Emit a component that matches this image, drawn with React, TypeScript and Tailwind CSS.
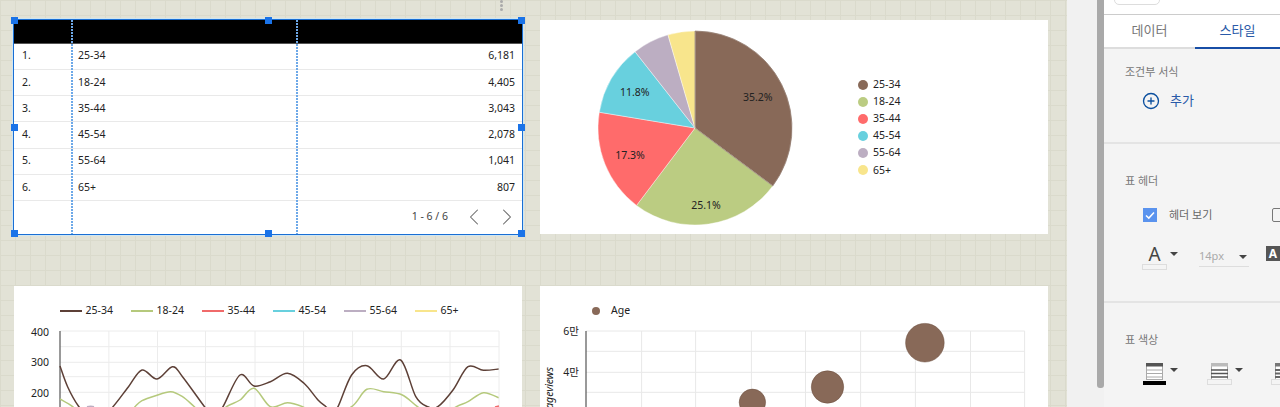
import { ChevronLeft, ChevronRight, CirclePlus } from 'lucide-react'

const ages = [
  { label: '25-34', color: '#886958', line: '#5d4037', pct: 35.2, value: '6,181' },
  { label: '18-24', color: '#bbcc82', line: '#b5c97c', pct: 25.1, value: '4,405' },
  { label: '35-44', color: '#ff6b6b', line: '#f06a6a', pct: 17.3, value: '3,043' },
  { label: '45-54', color: '#68d0de', line: '#68d0de', pct: 11.8, value: '2,078' },
  { label: '55-64', color: '#bcaec2', line: '#bcaec2', pct: 6.1, value: '1,041' },
  { label: '65+', color: '#f8e58c', line: '#f8e58c', pct: 4.5, value: '807' },
]

const brownLine: [number, number][] = [
  [60, 366], [67.6, 386.7], [78.4, 406], [90, 418], [100, 418], [113, 406.7], [128.5, 386.7], [142, 370], [157, 379],
  [172.4, 366.7], [182.5, 376.7], [204.5, 406.7], [214, 418], [223, 406.7], [240, 375], [254, 386], [270.4, 381.7],
  [287.4, 373.3], [304, 383.3], [318, 400], [326, 406.7], [332, 412], [338, 406.7], [351.6, 375], [366.8, 365.7],
  [383.7, 379], [400.6, 360], [415.8, 396.7], [427.6, 406.7], [437.8, 406.7], [453, 390], [468, 366.7], [483.4, 370.3],
  [498.6, 369],
]

const greenLine: [number, number][] = [
  [60, 399], [72.7, 406.7], [85, 418], [125, 418], [135, 406.7], [142, 400.7], [155.5, 395.7], [170.7, 391.7],
  [182.5, 396.7], [194.4, 406.7], [210, 420], [226.5, 406.7], [240, 400], [254, 388.3], [270.4, 406.7], [287.4, 402.7],
  [302.6, 406.7], [325, 418], [351.6, 406.7], [366.8, 389.3], [383.7, 391.7], [402.3, 395], [417.5, 406.7], [435, 418],
  [456.4, 406.7], [468, 401.7], [483.4, 392.7], [498.6, 397.7],
]

// catmull-rom through the points, good enough for the chart's soft curves
function smooth(points: [number, number][]) {
  let d = `M${points[0][0]} ${points[0][1]}`
  for (let i = 0; i < points.length - 1; i++) {
    const p0 = points[Math.max(i - 1, 0)]
    const p1 = points[i]
    const p2 = points[i + 1]
    const p3 = points[Math.min(i + 2, points.length - 1)]
    const c1x = p1[0] + (p2[0] - p0[0]) / 6
    const c1y = p1[1] + (p2[1] - p0[1]) / 6
    const c2x = p2[0] - (p3[0] - p1[0]) / 6
    const c2y = p2[1] - (p3[1] - p1[1]) / 6
    d += ` C${c1x} ${c1y} ${c2x} ${c2y} ${p2[0]} ${p2[1]}`
  }
  return d
}

function pieSlices(cx: number, cy: number, r: number) {
  let start = 0
  return ages.map((a) => {
    const end = start + (a.pct / 100) * Math.PI * 2
    const x1 = cx + r * Math.sin(start)
    const y1 = cy - r * Math.cos(start)
    const x2 = cx + r * Math.sin(end)
    const y2 = cy - r * Math.cos(end)
    const large = end - start > Math.PI ? 1 : 0
    start = end
    return { ...a, d: `M${cx} ${cy} L${x1} ${y1} A${r} ${r} 0 ${large} 1 ${x2} ${y2} Z` }
  })
}

function Handle({ className }: { className: string }) {
  return <span className={`absolute size-[7px] bg-[#1a73e8] ${className}`} />
}

function DataTable() {
  return (
    <div className="relative h-[214px] bg-white text-[10.5px] text-[#222] shadow-[0_0_0_1px_#1a6fd4,0_0_0_2px_#cfe6f2]">
      <div className="h-[23.5px] border-b border-[#555] bg-black" />
      {ages.map((a, i) => (
        <div key={a.label} className="flex h-[26.3px] items-center border-b border-[#e9e9e9]">
          <span className="w-[64px] pl-2">{i + 1}.</span>
          <span className="flex-1">{a.label}</span>
          <span className="pr-[7px]">{a.value}</span>
        </div>
      ))}
      <div className="flex h-[32px] items-center justify-end pr-px text-[#444]">
        <span className="mr-[12px]">1 - 6 / 6</span>
        <ChevronLeft className="size-7 text-[#666]" strokeWidth={0.9} />
        <ChevronRight className="ml-[5px] size-7 text-[#666]" strokeWidth={0.9} />
      </div>
      <span className="absolute inset-y-0 left-[56.5px] w-[2px] bg-[repeating-linear-gradient(#6ea9e8_0_2px,transparent_2px_3px)]" />
      <span className="absolute inset-y-0 left-[282px] w-[2px] bg-[repeating-linear-gradient(#6ea9e8_0_2px,transparent_2px_3px)]" />
      <Handle className="-left-[3px] -top-[3px]" />
      <Handle className="left-[251px] -top-[3px]" />
      <Handle className="-right-[3px] -top-[3px]" />
      <Handle className="-left-[3px] top-[104px]" />
      <Handle className="-right-[3px] top-[104px]" />
      <Handle className="-bottom-[3px] -left-[3px]" />
      <Handle className="-bottom-[3px] left-[251px]" />
      <Handle className="-bottom-[3px] -right-[3px]" />
    </div>
  )
}

function PieCard() {
  return (
    <div className="flex h-[214px] items-center bg-white pl-[55px] pt-[1px] text-[10.5px] text-[#222]">
      <svg viewBox="595 27.5 200 200" className="size-[200px] shrink-0">
        {pieSlices(695, 127.5, 97).map((s) => (
          <path key={s.label} d={s.d} fill={s.color} stroke="#fff" strokeWidth="0.4" />
        ))}
        <path d={pieSlices(695, 127.5, 97)[0].d} fill="none" stroke="#6b4c3d" strokeWidth="0.5" />
        <g fontSize="10.5" fill="#222" textAnchor="middle">
          <text x="757.8" y="100">35.2%</text>
          <text x="706" y="208">25.1%</text>
          <text x="630" y="158">17.3%</text>
          <text x="634.8" y="95">11.8%</text>
        </g>
      </svg>
      <div className="ml-[63px] flex flex-col">
        {ages.map((a) => (
          <div key={a.label} className="flex h-[17.2px] items-center gap-[5px]">
            <span className="size-[10px] rounded-full" style={{ backgroundColor: a.color }} />
            <span>{a.label}</span>
          </div>
        ))}
      </div>
    </div>
  )
}

function LineCard() {
  const hLines = [331, 346.7, 362.3, 376.7, 392.3]
  const vLines = [108.9, 157.5, 205.5, 255, 303.6, 352.6, 401.3, 450, 499]
  return (
    <div className="h-[214px] overflow-hidden bg-white text-[10.5px] text-[#222]">
      <div className="flex h-[32px] items-end pl-[46px]">
        {ages.map((a) => (
          <div key={a.label} className="flex h-[14px] w-[71px] items-center gap-[4px]">
            <span className="h-[2px] w-[21.5px]" style={{ backgroundColor: a.line }} />
            <span>{a.label}</span>
          </div>
        ))}
      </div>
      <svg viewBox="14 318 508 120" className="block h-[120px] w-[508px]">
        {hLines.map((y) => (
          <line key={y} x1="60" x2="499" y1={y} y2={y} stroke="#ececec" />
        ))}
        {vLines.map((x) => (
          <line key={x} x1={x} x2={x} y1="331" y2="438" stroke="#ececec" />
        ))}
        <line x1="60" x2="60" y1="331" y2="438" stroke="#555" strokeWidth="1.2" />
        <path d={smooth(greenLine)} fill="none" stroke="#b5c97c" strokeWidth="1.5" />
        <path d={smooth(brownLine)} fill="none" stroke="#5d4037" strokeWidth="1.5" />
        <path d="M87 406.8 Q91 405.6 94 406.8" fill="none" stroke="#bcaec2" strokeWidth="1.5" />
        <path d="M495 407 L499 406" fill="none" stroke="#f06a6a" strokeWidth="1.5" />
        <g fontSize="10.5" fill="#222" textAnchor="end">
          <text x="49" y="336">400</text>
          <text x="49" y="366">300</text>
          <text x="49" y="397">200</text>
        </g>
      </svg>
    </div>
  )
}

function BubbleCard() {
  const hLines = [331, 351.3, 372.3, 392.3]
  const vLines = [641.6, 695.6, 751.4, 805.5, 860.6, 915.4, 970.5, 1024.6]
  return (
    <div className="h-[214px] overflow-hidden bg-white text-[10.5px] text-[#222]">
      <div className="flex h-[32px] items-end pl-[52px]">
        <div className="flex h-[14px] items-center gap-[11px]">
          <span className="size-2 rounded-full bg-[#886958]" />
          <span>Age</span>
        </div>
      </div>
      <svg viewBox="540 318 508 120" className="block h-[120px] w-[508px]">
        {hLines.map((y) => (
          <line key={y} x1="586" x2="1024.6" y1={y} y2={y} stroke="#e8e8e8" />
        ))}
        {vLines.map((x) => (
          <line key={x} x1={x} x2={x} y1="331" y2="438" stroke="#e8e8e8" />
        ))}
        <line x1="586" x2="586" y1="331" y2="438" stroke="#555" strokeWidth="1.2" />
        <circle cx="924.9" cy="342.7" r="19.3" fill="#886958" stroke="#6b4c3d" strokeWidth="0.5" />
        <circle cx="827.5" cy="387" r="16.2" fill="#886958" stroke="#6b4c3d" strokeWidth="0.5" />
        <circle cx="752.4" cy="402.3" r="13.2" fill="#886958" stroke="#6b4c3d" strokeWidth="0.5" />
        <g fontSize="10.5" fill="#222" textAnchor="end">
          <text x="579" y="335">6만</text>
          <text x="579" y="376">4만</text>
        </g>
        <text
          x="0"
          y="0"
          fontSize="10.5"
          fontStyle="italic"
          fill="#222"
          textAnchor="end"
          transform="translate(553 367) rotate(-90)"
        >
          Pageviews
        </text>
      </svg>
    </div>
  )
}

function Caret({ className = '' }: { className?: string }) {
  return (
    <svg viewBox="0 0 8 4" className={`h-1 w-2 shrink-0 fill-[#444] ${className}`}>
      <path d="M0 0h8L4 4z" />
    </svg>
  )
}

function TableIcon({ head, body, weight = 1 }: { head: string; body: string; weight?: number }) {
  return (
    <svg viewBox="0 0 17 17" className="h-[17px] w-[17px] shrink-0">
      <rect x="0.5" y="0.5" width="16" height="16" fill="#fff" stroke="#aaa" />
      <rect x="0" y="0" width="17" height="3.5" fill={head} />
      <path d="M0 7h17M0 10.5h17M0 14h17" stroke={body} strokeWidth={weight} />
    </svg>
  )
}

function SwatchBar({ black }: { black?: boolean }) {
  return black ? (
    <span className="mt-px h-[4px] w-[23px] bg-black" />
  ) : (
    <span className="-mt-px h-[6px] w-[25px] border border-[#ddd] bg-[#f4f4f4]" />
  )
}

function SidePanel() {
  return (
    <div className="h-full w-[176px] shrink-0 overflow-hidden bg-[#f4f4f4] text-[11px] text-[#777]">
      <div className="flex h-[15px] items-end overflow-hidden border-b border-[#ccc] bg-white pb-[9px] pl-[10px]">
        <div className="h-[15px] w-[46px] shrink-0 rounded-[5px] border border-[#ddd]" />
      </div>
      <div className="flex h-[34px] bg-white text-[13px]">
        <div className="flex w-[91px] items-center justify-center border-b-2 border-[#ddd] text-[#777]">데이터</div>
        <div className="flex flex-1 items-center justify-center border-b-2 border-[#174ea6] text-[#2a5aa8]">스타일</div>
      </div>
      <div className="h-[95px] border-b-2 border-[#e4e4e4] pl-[21px] pt-4">
        <div className="h-[14px] leading-[14px]">조건부 서식</div>
        <div className="ml-[17px] mt-[14px] flex h-[16px] items-center gap-[10px] text-[13px] text-[#2a5aa8]">
          <CirclePlus className="size-[18px] text-[#0b4f9e]" strokeWidth={1.8} />
          <span>추가</span>
        </div>
      </div>
      <div className="h-[159px] border-b-2 border-[#e4e4e4] pl-[21px] pt-[30px]">
        <div className="h-[14px] leading-[14px]">표 헤더</div>
        <div className="ml-[18px] mt-5 flex h-[14px] items-center">
          <span className="flex size-[14px] shrink-0 items-center justify-center bg-[#5a93ee]">
            <svg viewBox="0 0 14 14" className="size-[14px] fill-none stroke-white stroke-[1.5]">
              <path d="M3 7.5l2.8 2.6L11 4.5" />
            </svg>
          </span>
          <span className="ml-3 w-[103px] shrink-0 text-[#666]">헤더 보기</span>
          <span className="size-[14px] shrink-0 rounded-[2px] border border-[#777]" />
        </div>
        <div className="ml-[17px] mt-[24px] flex h-[24px] items-start">
          <div className="flex w-[25px] shrink-0 flex-col items-center">
            <span className="h-[17px] text-[19px] leading-[17px] text-[#444]">A</span>
            <span className="mt-[0.5px] h-[6px] w-[25px] border border-[#ddd]" />
          </div>
          <Caret className="ml-[3px] mt-[6px]" />
          <div className="ml-[21px] flex h-[21px] w-[50px] shrink-0 items-center justify-between border-b border-[#ddd] pr-[2px] text-[#aaa]">
            <span>14px</span>
            <Caret className="mt-px" />
          </div>
          <span className="ml-[17px] flex h-[15px] w-[14px] shrink-0 items-center justify-center bg-[#555] text-[12px] font-bold text-white">
            A
          </span>
        </div>
      </div>
      <div className="pl-[21px] pt-[30px]">
        <div className="h-[14px] leading-[14px]">표 색상</div>
        <div className="ml-[17px] mt-4 flex items-start">
          <div className="flex w-[25px] shrink-0 flex-col items-center">
            <TableIcon head="#555" body="#aaa" />
            <SwatchBar black />
          </div>
          <Caret className="ml-[3px] mt-[5px]" />
          <div className="ml-[29px] flex w-[25px] shrink-0 flex-col items-center">
            <TableIcon head="#bbb" body="#555" weight={1.3} />
            <SwatchBar />
          </div>
          <Caret className="ml-[3px] mt-[5px]" />
          <div className="ml-[28px] flex w-[25px] shrink-0 flex-col items-center">
            <TableIcon head="#777" body="#666" weight={2} />
            <SwatchBar />
          </div>
        </div>
      </div>
    </div>
  )
}

export default function App() {
  return (
    <div className="flex h-[407px] w-[1280px] overflow-hidden bg-[#f1f1f1] font-['Noto_Sans','Noto_Sans_CJK_KR',sans-serif]">
      <div className="relative h-full w-[1067px] shrink-0 overflow-hidden bg-[#e2e2d6] bg-[linear-gradient(#dadacc_1px,transparent_1px),linear-gradient(90deg,#dadacc_1px,transparent_1px)] bg-[size:15px_15px]">
        <div className="grid grid-cols-[508px_508px] gap-x-[18px] gap-y-[52px] pl-[14px] pt-[20px]">
          <DataTable />
          <PieCard />
          <LineCard />
          <BubbleCard />
        </div>
        <div className="absolute left-[500px] top-0 flex flex-col gap-px">
          {[0, 1, 2].map((n) => (
            <span key={n} className="size-[3px] rounded-full bg-[#aaa]" />
          ))}
        </div>
      </div>
      <div className="w-[30px] shrink-0" />
      <div className="h-[388px] w-[7px] shrink-0 rounded-b-[3px] bg-[#a9a9a9]" />
      <SidePanel />
    </div>
  )
}
